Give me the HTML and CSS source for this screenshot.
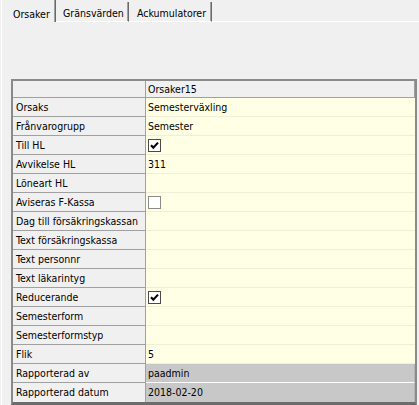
FILE: index.html
```html
<!DOCTYPE html>
<html>
<head>
<meta charset="utf-8">
<link rel="stylesheet" href="styles.css">
</head>
<body>
<div class="window">
  <div class="tabs">
    <div class="tab tab-active tab-1">Orsaker</div>
    <div class="tab tab-2">Gränsvärden</div>
    <div class="tab tab-3">Ackumulatorer</div>
    <div class="tab-fill"></div>
  </div>
  <div class="panel">
    <div class="grid">
      <div class="row head"><div class="label"></div><div class="value">Orsaker15</div></div>
      <div class="row"><div class="label">Orsaks</div><div class="value">Semesterväxling</div></div>
      <div class="row"><div class="label">Frånvarogrupp</div><div class="value">Semester</div></div>
      <div class="row"><div class="label">Till HL</div><div class="value"><span class="check checked"><svg width="11" height="11" viewBox="0 0 11 11"><path d="M2 5.2 L4.3 7.6 L9 2.6" fill="none" stroke="#000" stroke-width="2.1"/></svg></span></div></div>
      <div class="row"><div class="label">Avvikelse HL</div><div class="value">311</div></div>
      <div class="row"><div class="label">Löneart HL</div><div class="value"></div></div>
      <div class="row"><div class="label">Aviseras F-Kassa</div><div class="value"><span class="check"></span></div></div>
      <div class="row"><div class="label">Dag till försäkringskassan</div><div class="value"></div></div>
      <div class="row"><div class="label">Text försäkringskassa</div><div class="value"></div></div>
      <div class="row"><div class="label">Text personnr</div><div class="value"></div></div>
      <div class="row"><div class="label">Text läkarintyg</div><div class="value"></div></div>
      <div class="row"><div class="label">Reducerande</div><div class="value"><span class="check checked"><svg width="11" height="11" viewBox="0 0 11 11"><path d="M2 5.2 L4.3 7.6 L9 2.6" fill="none" stroke="#000" stroke-width="2.1"/></svg></span></div></div>
      <div class="row"><div class="label">Semesterform</div><div class="value"></div></div>
      <div class="row"><div class="label">Semesterformstyp</div><div class="value"></div></div>
      <div class="row"><div class="label">Flik</div><div class="value">5</div></div>
      <div class="row ro"><div class="label">Rapporterad av</div><div class="value">paadmin</div></div>
      <div class="row ro last"><div class="label">Rapporterad datum</div><div class="value">2018-02-20</div></div>
    </div>
  </div>
</div>
</body>
</html>
```

FILE: styles.css
```css
* { box-sizing: border-box; }
html, body {
  margin: 0;
  padding: 0;
  background: #f0f0f0;
}
body {
  width: 419px;
  height: 405px;
  overflow: hidden;
  font-family: "DejaVu Sans Condensed", "DejaVu Sans", sans-serif;
  font-stretch: condensed;
  font-size: 10.5px;
  color: #000;
}
.window {
  width: 419px;
  height: 405px;
}
.tabs {
  display: flex;
  height: 22px;
  align-items: flex-end;
}
.tab {
  height: 19px;
  padding-top: 4px;
  line-height: 14px;
  white-space: nowrap;
  border-right: 1px solid #696969;
  box-shadow: inset -1px 0 0 #a0a0a0;
}
.tab-1 {
  height: 22px;
  padding-top: 7px;
  margin-left: 1px;
  width: 55px;
  padding-left: 11px;
  border-left: 1px solid #ffffff;
}
.tab-2 {
  width: 73px;
  padding-left: 7px;
  border-bottom: 1px solid #ffffff;
  height: 20px;
}
.tab-3 {
  width: 83px;
  padding-left: 8px;
  border-bottom: 1px solid #ffffff;
  height: 20px;
}
.tab-fill {
  flex: 1;
  border-bottom: 1px solid #ffffff;
}
.panel {
  margin-left: 1px;
  height: 383px;
  border-left: 1px solid #ffffff;
  padding: 57px 0 0 9px;
}
.grid {
  width: 406px;
  border: 2px solid #8a8a8a;
  border-bottom: 4px solid #6c6c6c;
  background: #f0f0f0;
}
.row {
  display: flex;
  height: 19px;
}
.label {
  width: 133px;
  flex: none;
  padding: 1px 0 0 3px;
  line-height: 17px;
  background: #f0f0f0;
  border-right: 1px solid #a0a0a0;
  border-bottom: 1px solid #a0a0a0;
  white-space: nowrap;
  overflow: hidden;
}
.value {
  flex: 1;
  padding: 1px 0 0 2px;
  line-height: 17px;
  background: #ffffe6;
  border-bottom: 1px solid #efefd8;
  white-space: nowrap;
}
.head {
  height: 17px;
}
.head .label,
.head .value {
  padding-top: 0;
  line-height: 16px;
  background: #f0f0f0;
  border-bottom: 1px solid #a0a0a0;
}
.head .value {
  border-right: 1px solid #a0a0a0;
}
.ro .value {
  background: #c8c8c8;
  border-bottom: 1px solid #ffffff;
  border-right: 1px solid #b4b4b4;
}
.last .label,
.last .value {
  border-bottom: none;
}
.check {
  display: block;
  width: 13px;
  height: 13px;
  margin-top: 2px;
  border: 1px solid #8a8a8a;
  background: #ffffff;
}
.check.checked {
  border-color: #4a4a4a;
}
.check svg {
  display: block;
}
```
